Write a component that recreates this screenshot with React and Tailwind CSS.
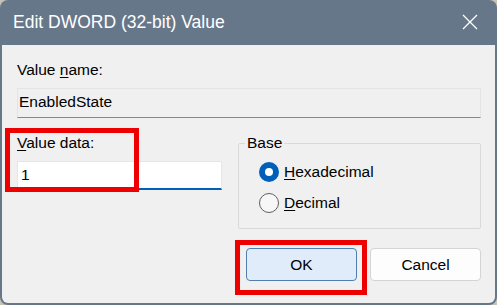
import React from "react";

const font = { fontFamily: '"Liberation Sans", Arial, sans-serif' };

function Radio({ checked, children }) {
  return (
    <div className="flex items-center h-[20px]">
      {checked ? (
        <span className="w-[20px] h-[20px] rounded-full bg-[#005fb8] flex items-center justify-center">
          <span className="w-[8px] h-[8px] rounded-full bg-white" />
        </span>
      ) : (
        <span className="w-[20px] h-[20px] rounded-full border border-[#5f5f5f] bg-[#f7f7f7]" />
      )}
      <span className="ml-[5px] text-[15.5px] leading-[18px] text-black">{children}</span>
    </div>
  );
}

export default function App() {
  return (
    <div className="relative w-[497px] h-[305px] bg-[#c9c3b4] overflow-hidden" style={font}>
      <div className="flex flex-col w-[497px] h-[305px] bg-[#67778a] rounded-[8px] px-[2px] pb-[2px]">
        {/* Title bar */}
        <div className="flex items-center justify-between h-[45px] shrink-0 pl-[11px] pr-[17px]">
          <span className="text-white text-[17.5px] leading-[21px]">Edit DWORD (32-bit) Value</span>
          <svg width="16" height="16" viewBox="0 0 16 16" className="mt-[-1px]">
            <path d="M1 1 L15 15 M15 1 L1 15" stroke="white" strokeWidth="1.3" fill="none" />
          </svg>
        </div>
        {/* Content */}
        <div className="flex-1 flex flex-col bg-[#f0f0f0] rounded-b-[6px] pt-[16px] pl-[15px] pr-[14px] text-black">
          <div className="text-[15.5px] leading-[18px]">
            Value <span className="underline underline-offset-[2px]">n</span>ame:
          </div>
          <div className="mt-[9px] h-[30px] border border-[#e4e4e4] border-b-[#878787] pt-[4px] pl-[1px] text-[15.5px] leading-[18px]">
            EnabledState
          </div>
          <div className="mt-[16px] flex items-start">
            <div className="flex flex-col w-[205px]">
              <div className="text-[15.5px] leading-[18px]">
                <span className="underline underline-offset-[2px]">V</span>alue data:
              </div>
              <div className="mt-[9px] h-[29px] bg-white border border-[#e6e6e6] border-b-2 border-b-[#005fb8] flex items-center pl-[3px] text-[15.5px] leading-[18px]">
                1
              </div>
            </div>
            <fieldset className="ml-[16px] w-[243px] border border-[#d9d9d9] rounded-[2px] pl-[6px] pt-[10px] pb-[15px]">
              <legend className="px-[2px] text-[15.5px] leading-[18px]">Base</legend>
              <div className="ml-[14px] flex flex-col gap-[11px]">
                <Radio checked>
                  <span className="underline underline-offset-[2px]">H</span>exadecimal
                </Radio>
                <Radio>
                  <span className="underline underline-offset-[2px]">D</span>ecimal
                </Radio>
              </div>
            </fieldset>
          </div>
          <div className="mt-[19px] flex justify-end gap-[13px]">
            <button className="w-[111px] h-[33px] rounded-[4px] bg-[#e0ecf9] border border-[#4f7fb0] text-[15.5px] text-black">
              OK
            </button>
            <button className="w-[111px] h-[33px] rounded-[4px] bg-[#fdfdfd] border border-[#d4d4d4] text-[15.5px] text-black">
              Cancel
            </button>
          </div>
        </div>
      </div>
      {/* Red annotation boxes */}
      <div className="absolute left-[5px] top-[128px] w-[134px] h-[64px] border-[5px] border-[#ee0000]" />
      <div className="absolute left-[235px] top-[240px] w-[132px] h-[55px] border-[5px] border-[#ee0000]" />
    </div>
  );
}
